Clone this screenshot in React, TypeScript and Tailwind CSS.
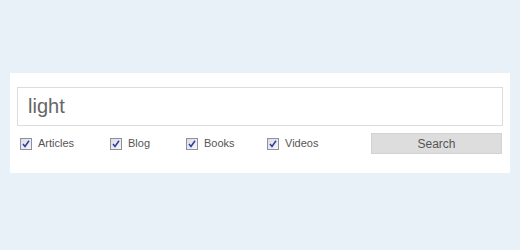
import React, { useState } from 'react';

interface FilterProps {
  label: string;
  width: string;
  checked: boolean;
  onToggle: () => void;
}

const Filter: React.FC<FilterProps> = ({ label, width, checked, onToggle }) => (
  <label className={`flex items-center cursor-pointer ${width}`} onClick={onToggle}>
    <span className="w-[12px] h-[12px] border border-[#8f8f9d] bg-gradient-to-br from-[#dcdce4] to-[#f6f6f8] flex items-center justify-center">
      {checked && (
        <svg width="8" height="8" viewBox="0 0 8 8">
          <path d="M1 4 L3 6.5 L7 0.8" fill="none" stroke="#2b3e9c" strokeWidth="1.5" />
        </svg>
      )}
    </span>
    <span className="ml-[6px] text-[11px] text-[#555] leading-none">{label}</span>
  </label>
);

const App: React.FC = () => {
  const [query, setQuery] = useState('light');
  const [filters, setFilters] = useState({ Articles: true, Blog: true, Books: true, Videos: true });

  const toggle = (key: keyof typeof filters) => setFilters(prev => ({ ...prev, [key]: !prev[key] }));

  return (
    <div className="w-[520px] h-[250px] bg-[#e8f0f8] pt-[73px] px-[10px] font-['Liberation_Sans',Arial,sans-serif]">
      <div className="bg-white px-[7px] pt-[14px] pb-[19px]">
        <input
          type="text"
          value={query}
          onChange={(e) => setQuery(e.target.value)}
          className="w-full h-[39px] border border-[#dcdcdc] px-[10px] text-[20px] text-[#666] focus:outline-none"
        />
        <div className="flex items-center mt-[7px]">
          <div className="flex items-center pl-[3px]">
            <Filter label="Articles" width="w-[90px]" checked={filters.Articles} onToggle={() => toggle('Articles')} />
            <Filter label="Blog" width="w-[76px]" checked={filters.Blog} onToggle={() => toggle('Blog')} />
            <Filter label="Books" width="w-[81px]" checked={filters.Books} onToggle={() => toggle('Books')} />
            <Filter label="Videos" width="w-[90px]" checked={filters.Videos} onToggle={() => toggle('Videos')} />
          </div>
          <button className="ml-auto mr-[1px] w-[131px] h-[21px] bg-[#dddddd] border border-[#d2d2d2] text-[12px] text-[#555]">
            Search
          </button>
        </div>
      </div>
    </div>
  );
};

export default App;
